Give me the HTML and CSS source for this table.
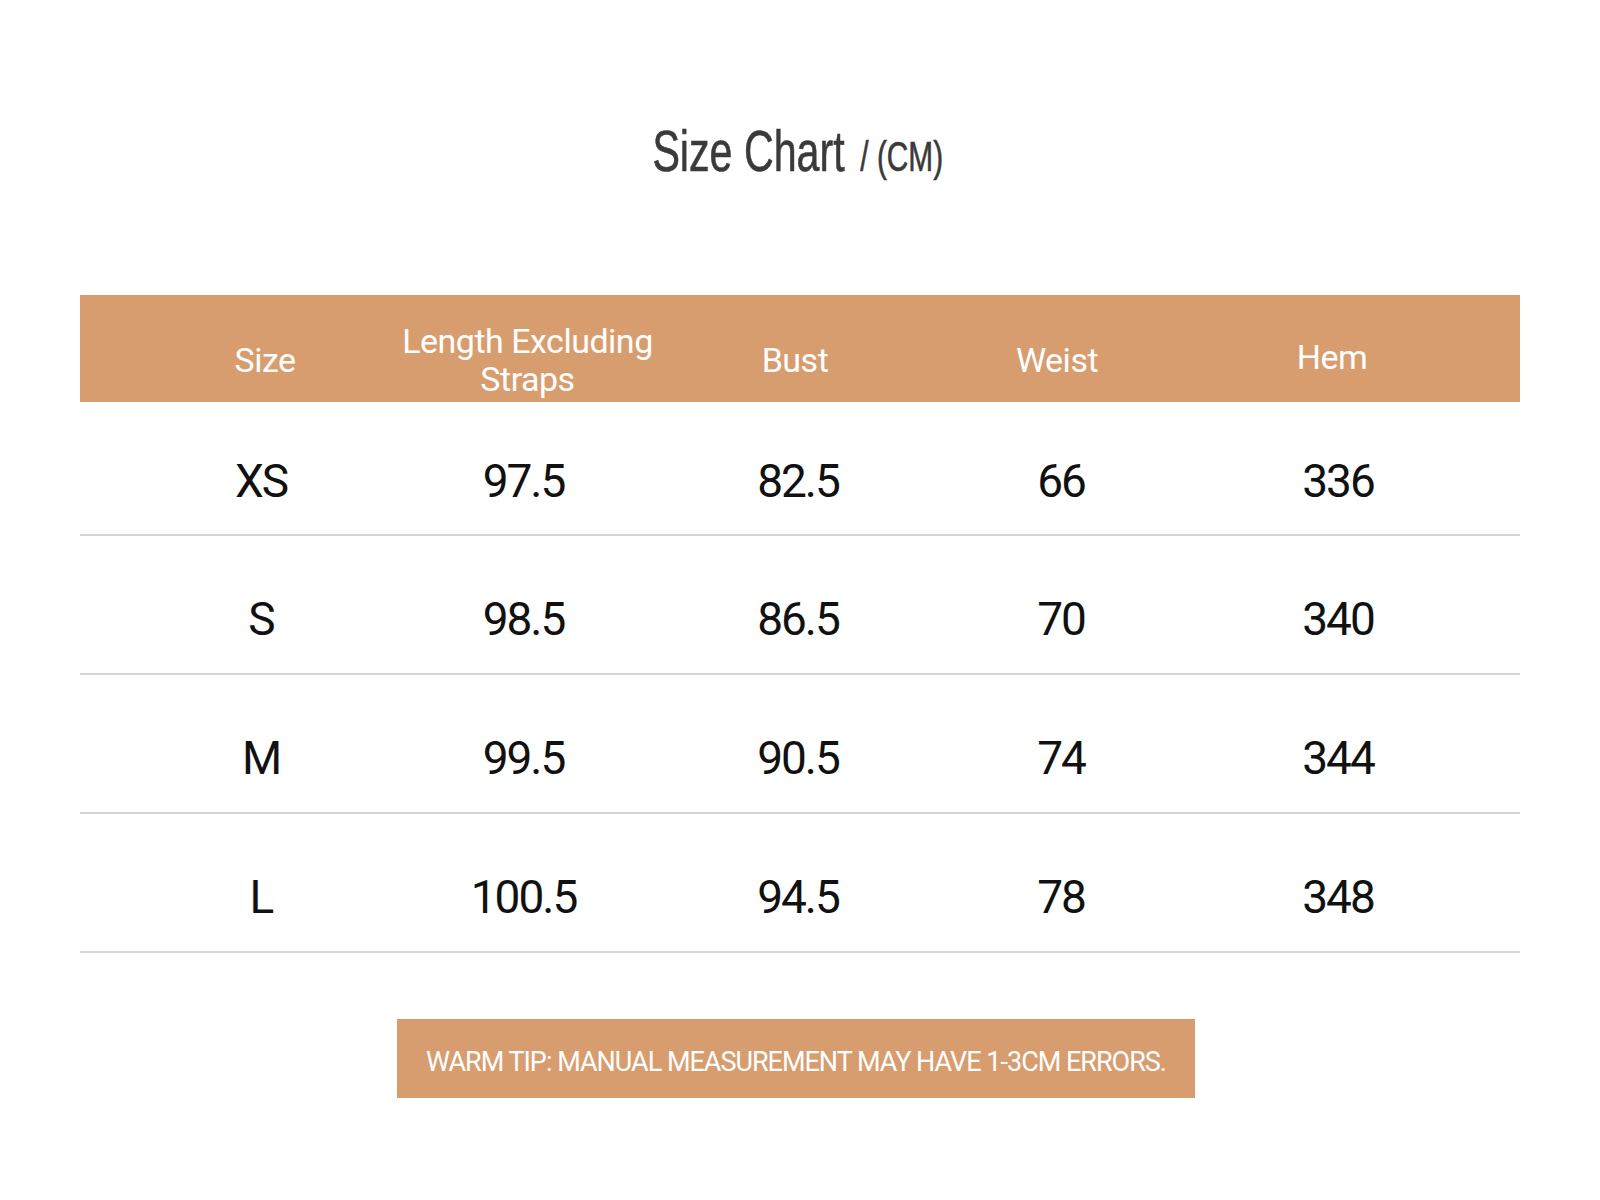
FILE: index.html
```html
<!DOCTYPE html>
<html>
<head>
<meta charset="utf-8">
<link rel="stylesheet" href="styles.css">
</head>
<body>
<div class="page">
  <h1 class="title"><span class="title-inner">Size Chart <small class="unit">/ (CM)</small></span></h1>
  <div class="table">
    <div class="row head">
      <div class="cell h1">Size</div>
      <div class="cell h2">Length Excluding<br>Straps</div>
      <div class="cell h3">Bust</div>
      <div class="cell h4">Weist</div>
      <div class="cell h5">Hem</div>
    </div>
    <div class="row body first">
      <div class="cell">XS</div><div class="cell">97.5</div><div class="cell">82.5</div><div class="cell">66</div><div class="cell">336</div>
    </div>
    <div class="row body">
      <div class="cell">S</div><div class="cell">98.5</div><div class="cell">86.5</div><div class="cell">70</div><div class="cell">340</div>
    </div>
    <div class="row body">
      <div class="cell">M</div><div class="cell">99.5</div><div class="cell">90.5</div><div class="cell">74</div><div class="cell">344</div>
    </div>
    <div class="row body">
      <div class="cell">L</div><div class="cell">100.5</div><div class="cell">94.5</div><div class="cell">78</div><div class="cell">348</div>
    </div>
  </div>
  <div class="tip">WARM TIP: MANUAL MEASUREMENT MAY HAVE 1-3CM ERRORS.</div>
</div>
</body>
</html>
```

FILE: styles.css
```css
html, body {
  margin: 0;
  padding: 0;
  background: #ffffff;
}
.page {
  width: 1600px;
  height: 1200px;
  display: flex;
  flex-direction: column;
  align-items: center;
}
.title {
  margin: 116px 0 0 0;
  height: 70px;
  line-height: 70px;
  font-family: "Liberation Sans Narrow", "Liberation Sans", sans-serif;
  font-weight: normal;
  font-size: 58px;
  color: #3a3a3a;
  text-align: center;
  -webkit-text-stroke: 0.6px #3a3a3a;
}
.title-inner {
  display: inline-block;
  transform: scaleX(0.71);
  white-space: nowrap;
  margin-right: 4px;
}
.unit {
  font-size: 42px;
  margin-left: 6px;
}
.table {
  margin-top: 109px;
  width: 1440px;
  display: flex;
  flex-direction: column;
}
.row {
  display: grid;
  grid-template-columns: 262px 263px 286px 240px 314px;
  padding: 0 0 0 50px;
  box-sizing: border-box;
}
.row.head {
  background: #d89d6f;
  height: 107px;
  color: #ffffff;
  font-family: "Roboto", sans-serif;
  font-size: 34px;
  line-height: 38px;
  letter-spacing: -0.5px;
  align-items: center;
  padding-top: 22px;
}
.row.head .h1 { padding-left: 8px; }
.row.head .h2 { padding-left: 8px; }
.row.head .h3 { padding-right: 6px; }
.row.head .h4 { padding-right: 8px; }
.row.head .h5 { padding-right: 12px; margin-top: -6px; }
.cell {
  text-align: center;
}
.row.body {
  height: 139px;
  box-sizing: border-box;
  border-bottom: 2px solid #d6d6d6;
  align-items: center;
  padding-top: 28px;
  color: #111111;
  font-family: "Roboto", sans-serif;
  font-size: 46px;
  letter-spacing: -2px;
}
.row.body.first {
  height: 134px;
  padding-top: 26px;
}
.tip {
  margin-top: 66px;
  margin-right: 8px;
  width: 798px;
  height: 79px;
  background: #d89d6f;
  color: #ffffff;
  font-family: "Roboto", sans-serif;
  font-size: 27px;
  letter-spacing: -1px;
  display: flex;
  align-items: center;
  justify-content: center;
  padding-top: 6px;
  box-sizing: border-box;
}
```
